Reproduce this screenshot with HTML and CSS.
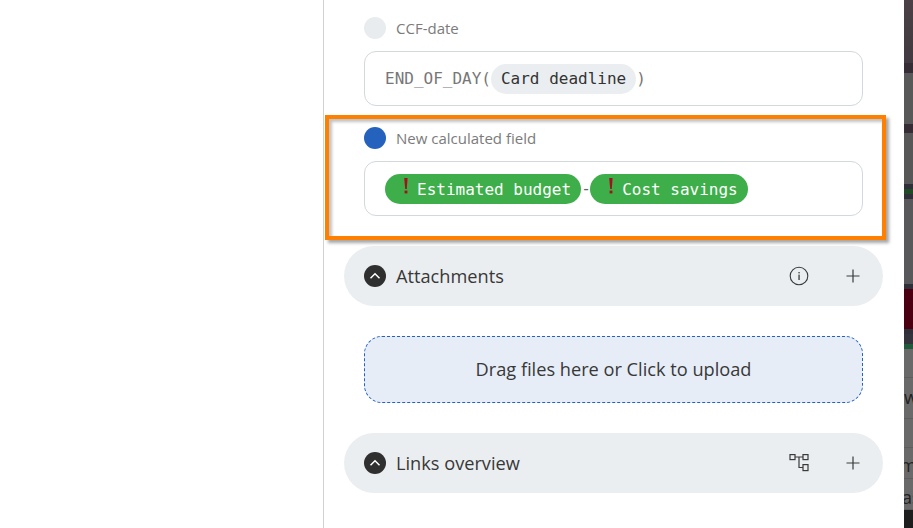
FILE: index.html
```html
<!DOCTYPE html>
<html lang="en">
<head>
<meta charset="utf-8">
<title>Card fields</title>
<link rel="stylesheet" href="styles.css">
</head>
<body>
<div class="page">
  <div class="blank"></div>
  <main class="panel">
    <section class="field">
      <div class="field-label"><span class="dot dot-grey"></span><span>CCF-date</span></div>
      <div class="formula">
        <span class="fn">END_OF_DAY(</span><span class="chip chip-grey">Card deadline</span><span class="fn">)</span>
      </div>
    </section>
    <section class="field field-new">
      <div class="field-label"><span class="dot dot-blue"></span><span>New calculated field</span></div>
      <div class="formula">
        <span class="chip chip-green"><svg class="warn" width="6" height="16" viewBox="0 0 6 16"><path d="M1.2 0h3.4L3.8 11H2.2z" fill="#a3111f"/><rect x="1.6" y="12.6" width="2.8" height="2.8" fill="#a3111f"/></svg>Estimated budget</span><span class="minus">-</span><span class="chip chip-green"><svg class="warn" width="6" height="16" viewBox="0 0 6 16"><path d="M1.2 0h3.4L3.8 11H2.2z" fill="#a3111f"/><rect x="1.6" y="12.6" width="2.8" height="2.8" fill="#a3111f"/></svg>Cost savings</span>
      </div>
      <div class="highlight"></div>
    </section>
    <section class="bar bar-first">
      <span class="toggle"><svg width="12" height="8" viewBox="0 0 12 8"><path d="M1.5 6.2 6 1.8l4.5 4.4" fill="none" stroke="#fff" stroke-width="1.5"/></svg></span>
      <span class="bar-title">Attachments</span>
      <svg class="bar-icon" width="20" height="20" viewBox="0 0 20 20"><circle cx="10" cy="10" r="8.8" fill="none" stroke="#3a3a3a" stroke-width="1.1"/><rect x="9.4" y="8.6" width="1.3" height="5.4" fill="#3a3a3a"/><rect x="9.4" y="6" width="1.3" height="1.4" fill="#3a3a3a"/></svg>
      <svg class="bar-plus" width="14" height="14" viewBox="0 0 14 14"><path d="M7 .5v13M.5 7h13" stroke="#3a3a3a" stroke-width="1.2" fill="none"/></svg>
    </section>
    <div class="upload">Drag files here or Click to upload</div>
    <section class="bar">
      <span class="toggle"><svg width="12" height="8" viewBox="0 0 12 8"><path d="M1.5 6.2 6 1.8l4.5 4.4" fill="none" stroke="#fff" stroke-width="1.5"/></svg></span>
      <span class="bar-title">Links overview</span>
      <svg class="bar-icon" width="20" height="20" viewBox="0 0 20 20"><g fill="none" stroke="#3a3a3a" stroke-width="1.2"><rect x="1" y="1.6" width="5" height="5"/><rect x="14" y="1.6" width="5" height="5"/><rect x="14" y="11.6" width="5" height="6"/><path d="M6 4h8M10 4v10.5h4"/></g></svg>
      <svg class="bar-plus" width="14" height="14" viewBox="0 0 14 14"><path d="M7 .5v13M.5 7h13" stroke="#3a3a3a" stroke-width="1.2" fill="none"/></svg>
    </section>
  </main>
  <aside class="backdrop">
    <div class="strip s1"></div><div class="strip s2"></div><div class="strip s3"></div><div class="strip s2b"></div>
    <div class="strip s4"></div><div class="strip s5"></div><div class="strip s6"></div><div class="strip s5"></div>
    <div class="strip s7"></div><div class="strip s5"></div><div class="strip s8"></div><div class="strip s5"></div><div class="strip s5b"></div><div class="strip s6b"></div>
    <div class="strip row r1"></div>
    <div class="strip row r2">w</div>
    <div class="strip row r3"></div>
    <div class="strip row r4">m</div>
    <div class="strip row r5">as</div>
    <div class="strip s9"></div>
  </aside>
</div>
</body>
</html>
```

FILE: styles.css
```css
* { box-sizing: border-box; }
html, body { margin: 0; height: 100%; overflow: hidden; background: #fff; }
body { font-family: "Open Sans", "Noto Sans", sans-serif; color: #333; }

.page { display: grid; grid-template-columns: 323px 581px 9px; height: 528px; }
.blank { background: #fff; }

.panel {
  position: relative;
  border-left: 1px solid #d0d3d6;
  padding: 17px 41px 0 40px;
  background: #fff;
}

.field { position: relative; }
.field-new { margin-top: 21px; }
.field-label {
  display: flex;
  align-items: center;
  gap: 10px;
  height: 22px;
  font-size: 15px;
  color: #7b7b7b;
}
.dot { width: 22px; height: 22px; border-radius: 50%; flex: none; }
.dot-grey { background: #e9ecef; }
.dot-blue { background: #2562bd; }

.formula {
  display: flex;
  align-items: center;
  height: 55px;
  margin-top: 12px;
  padding: 0 20px;
  border: 1px solid #d2d8dc;
  border-radius: 12px;
  font-family: "DejaVu Sans Mono", monospace;
  font-size: 16px;
}
.fn { color: #777; }
.chip {
  display: inline-flex;
  align-items: center;
  height: 30px;
  border-radius: 15px;
  white-space: nowrap;
}
.chip-grey { background: #ebeef0; color: #333; padding: 0 10px; }
.chip-green { background: #3dae49; color: #fff; padding: 0 10px 0 18px; margin-top: 1px; }
.warn { margin-right: 8px; flex: none; margin-top: -6px; }
.minus { color: #666; width: 9px; text-align: center; }

.highlight {
  position: absolute;
  left: -39px;
  right: -23px;
  top: -12px;
  height: 125px;
  border: 4px solid #ff7f00;
  box-shadow: 3px 3px 3px rgba(80, 80, 80, 0.5), inset 3px 3px 3px rgba(80, 80, 80, 0.35);
  pointer-events: none;
}

.bar {
  display: flex;
  align-items: center;
  height: 60px;
  margin: 0 -20px;
  padding: 0 21px 0 20px;
  border-radius: 30px;
  background: #ebeef0;
}
.bar-first { margin-top: 30px; }
.toggle {
  display: flex;
  align-items: center;
  justify-content: center;
  width: 22px;
  height: 22px;
  border-radius: 50%;
  background: #2f2f2f;
  flex: none;
}
.bar-title { margin-left: 10px; font-size: 18.2px; font-weight: 500; color: #383838; flex: 1; }
.bar-icon { flex: none; margin-right: 37px; margin-left: 1px; margin-top: -1px; }
.bar-plus { flex: none; margin-right: 2px; }

.upload {
  display: flex;
  align-items: center;
  justify-content: center;
  height: 67px;
  margin: 30px 0;
  padding-bottom: 2px;
  border: 1px dashed #2562bd;
  border-radius: 18px;
  background: #e7edf7;
  font-size: 18.2px;
  font-weight: 500;
  color: #383838;
}

.backdrop { display: flex; flex-direction: column; height: 528px; overflow: hidden; }
.strip { flex: none; }
.s1 { height: 63px; background: linear-gradient(#4a4046, #423a40); }
.s2 { height: 10px; background: #352c35; }
.s2b { height: 9px; background: #352c35; }
.s3 { height: 51px; background: #585858; }
.s4 { height: 51px; background: #575757; }
.s5 { height: 5px; background: #2f2f3a; }
.s5b { height: 10px; background: #33333b; }
.s6 { height: 5px; background: #1f4a25; }
.s7 { height: 85px; background: #58585a; }
.s8 { height: 40px; background: #4a0010; }
.s6b { height: 5px; background: #1f5a3a; }
.s9 { height: 18px; background: #1e1e1e; }
.row {
  border-bottom: 1px solid #5d5d5d;
  background: #696969;
  font-size: 18px;
  line-height: 1;
  color: #222;
  overflow: hidden;
  white-space: nowrap;
}
.r1 { height: 29px; }
.r2 { height: 41px; padding-top: 10px; }
.r3 { height: 29px; }
.r4 { height: 31px; padding-top: 8px; text-indent: -4px; }
.r5 { height: 31px; padding-top: 9px; text-indent: -2px; }
```
